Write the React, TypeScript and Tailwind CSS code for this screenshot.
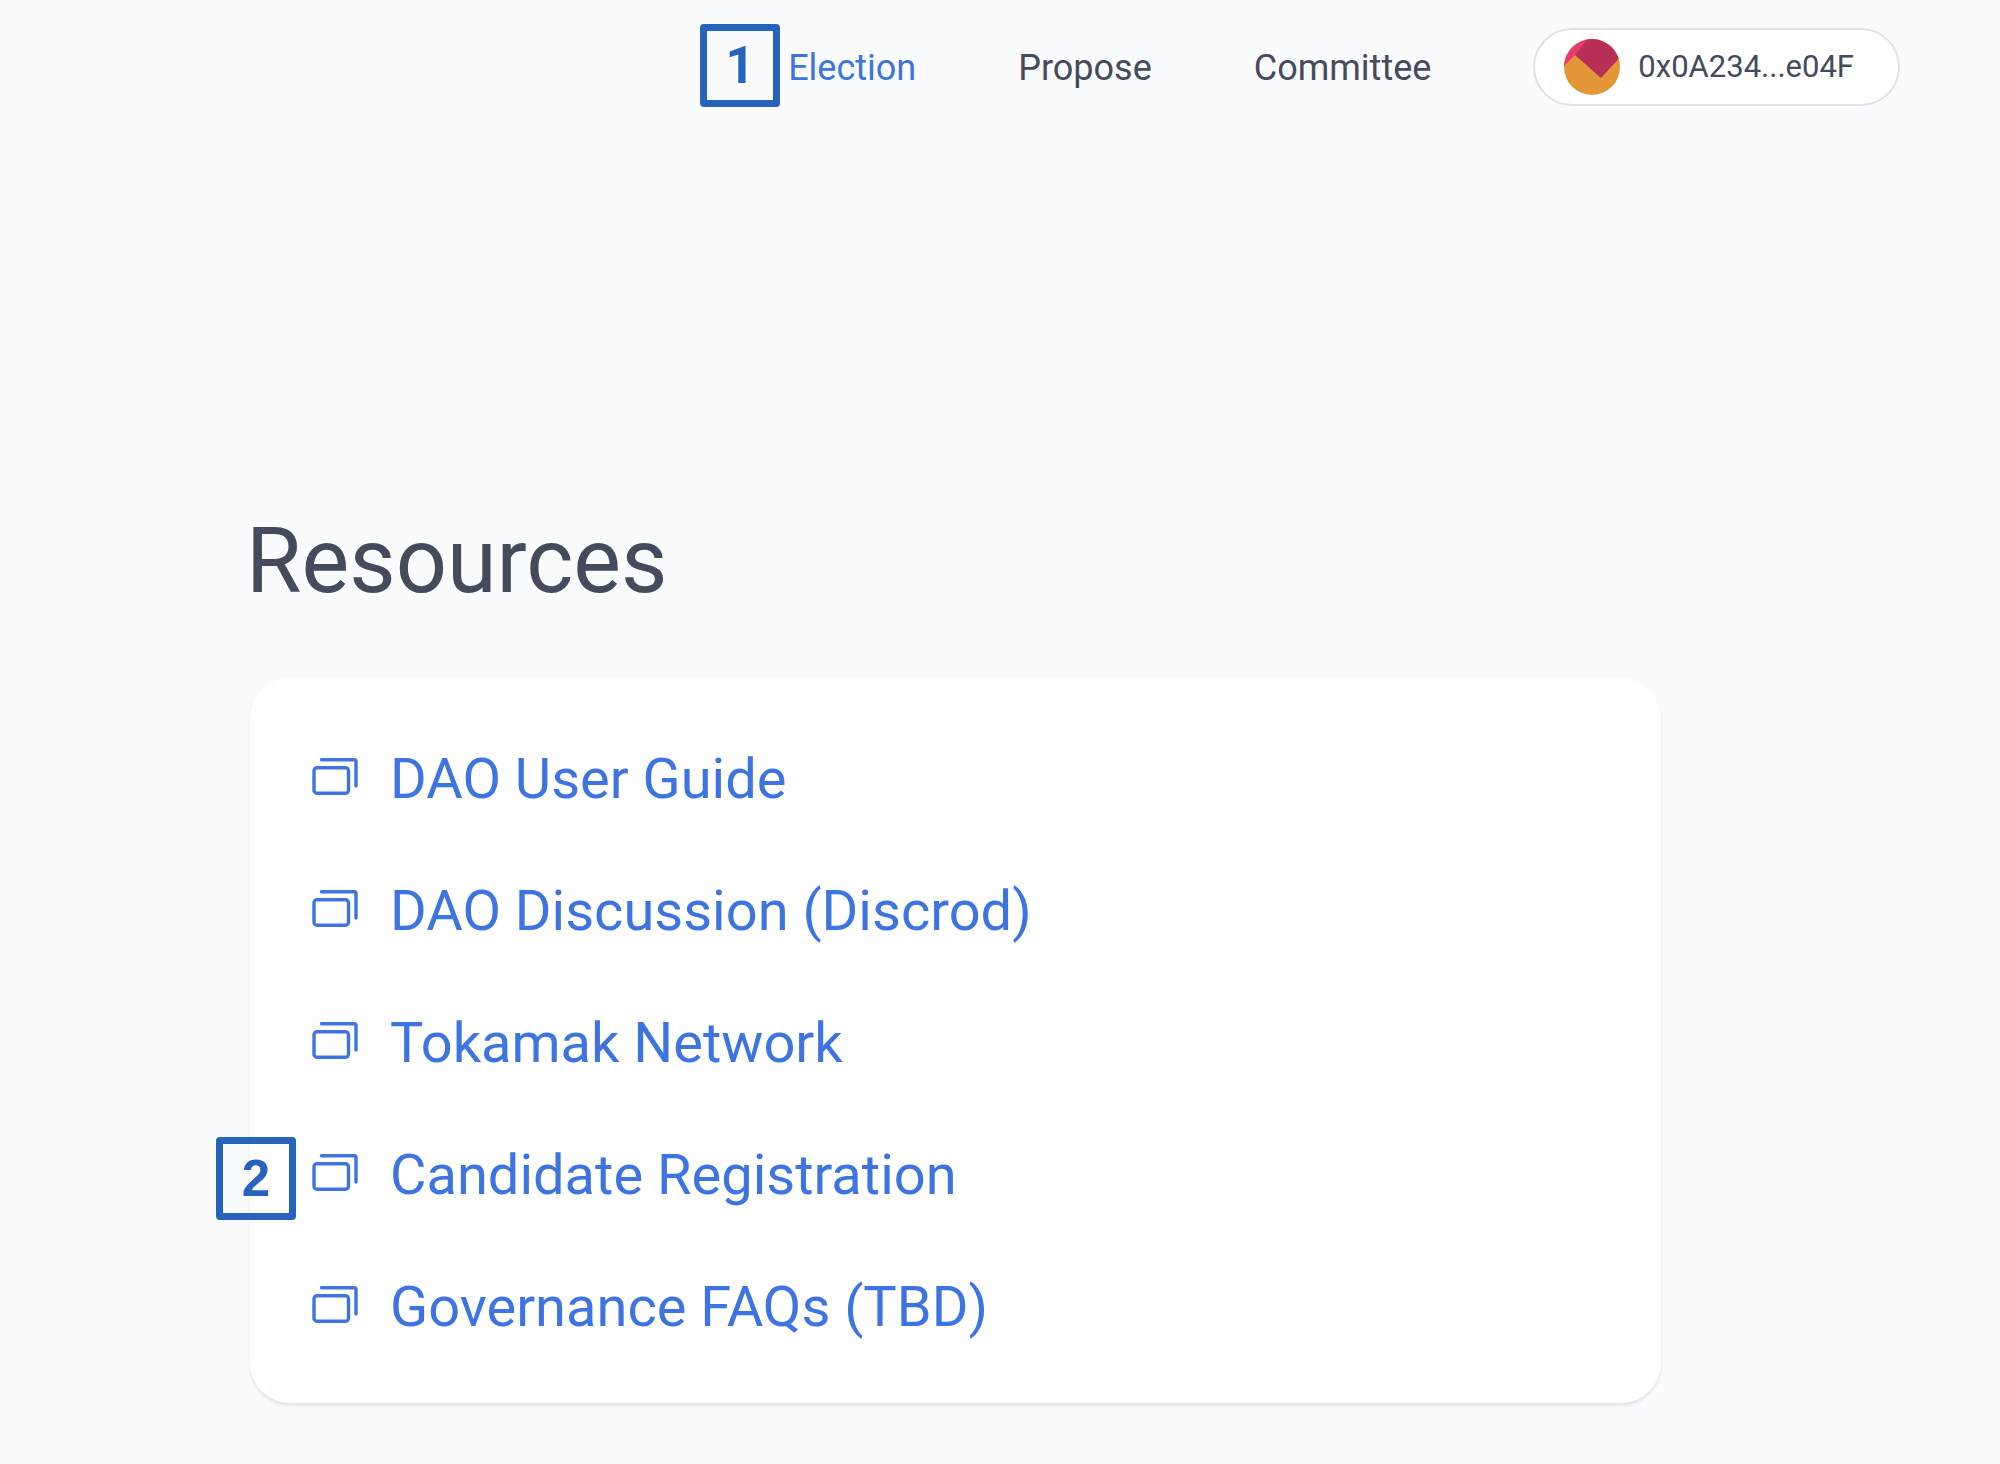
import React from "react";

const navItems = [
  { label: "Election", active: true, marker: "1" },
  { label: "Propose" },
  { label: "Committee" },
];

const resources = [
  { label: "DAO User Guide" },
  { label: "DAO Discussion (Discrod)" },
  { label: "Tokamak Network" },
  { label: "Candidate Registration", marker: "2" },
  { label: "Governance FAQs (TBD)" },
];

function Marker({ children, className }: { children: React.ReactNode; className: string }) {
  return (
    <span
      className={`absolute right-full flex h-[83px] w-20 items-center justify-center rounded border-[7px] border-[#2563bc] text-[51px] leading-none font-bold text-[#2563bc] ${className}`}
    >
      {children}
    </span>
  );
}

function WindowsIcon() {
  return (
    <svg
      className="h-11 w-[46px] shrink-0"
      viewBox="0 0 46 44"
      fill="none"
      stroke="currentColor"
      strokeWidth="3.4"
      aria-hidden="true"
    >
      <rect x="2" y="10.7" width="34.5" height="25.6" rx="3" />
      <path d="M9.5 2.7H42.5a1.5 1.5 0 0 1 1.5 1.5V29" strokeLinecap="round" />
    </svg>
  );
}

function Avatar() {
  return (
    <svg className="size-14 shrink-0" viewBox="0 0 56 56" aria-hidden="true">
      <defs>
        <clipPath id="avatar-circle">
          <circle cx="28" cy="28" r="28" />
        </clipPath>
      </defs>
      <g clipPath="url(#avatar-circle)">
        <rect width="56" height="56" fill="#e59636" />
        <path d="M-3 30L11 16L28-4H-3Z" fill="#ea3a70" />
        <path d="M11 16L27-4H60V14L37 39Z" fill="#b72f57" />
      </g>
    </svg>
  );
}

export default function App() {
  return (
    <div className="min-h-screen bg-[#fafbfd] font-['Roboto',sans-serif] text-[#454b5d]">
      <header className="flex items-center justify-end gap-[102px] pt-7 pr-[100px]">
        <nav className="flex items-center gap-[102px] pt-0.5 text-4xl leading-[44px]">
          {navItems.map((item) => (
            <a key={item.label} href="#" className={item.active ? "relative text-[#3d74e2]" : "relative"}>
              {item.marker && (
                <Marker className="-top-[22px] mr-2 font-['Roboto',sans-serif]">{item.marker}</Marker>
              )}
              {item.label}
            </a>
          ))}
        </nav>
        <button
          type="button"
          className="flex h-[78px] items-center gap-[18px] rounded-full border-2 border-[#dfe1e6] bg-white pr-11 pl-[29px] text-[31px] leading-10"
        >
          <Avatar />
          0x0A234...e04F
        </button>
      </header>

      <main className="mt-[396px] mr-[339px] ml-[250px] pb-14">
        <h1 className="-ml-1 text-[90px] leading-[120px]">Resources</h1>
        <ul className="mt-14 flex flex-col gap-[60px] rounded-[40px] bg-white px-[62px] pt-[65px] pb-[60px] text-[56px] leading-[72px] text-[#3d74e2] shadow-[0_3px_3px_rgba(60,70,90,0.12)]">
          {resources.map((item) => (
            <li key={item.label} className="relative flex">
              {item.marker && (
                <Marker className="-top-0.5 mr-4 font-['Liberation_Sans',sans-serif]">{item.marker}</Marker>
              )}
              <a href="#" className="flex items-center gap-8">
                <WindowsIcon />
                {item.label}
              </a>
            </li>
          ))}
        </ul>
      </main>
    </div>
  );
}
